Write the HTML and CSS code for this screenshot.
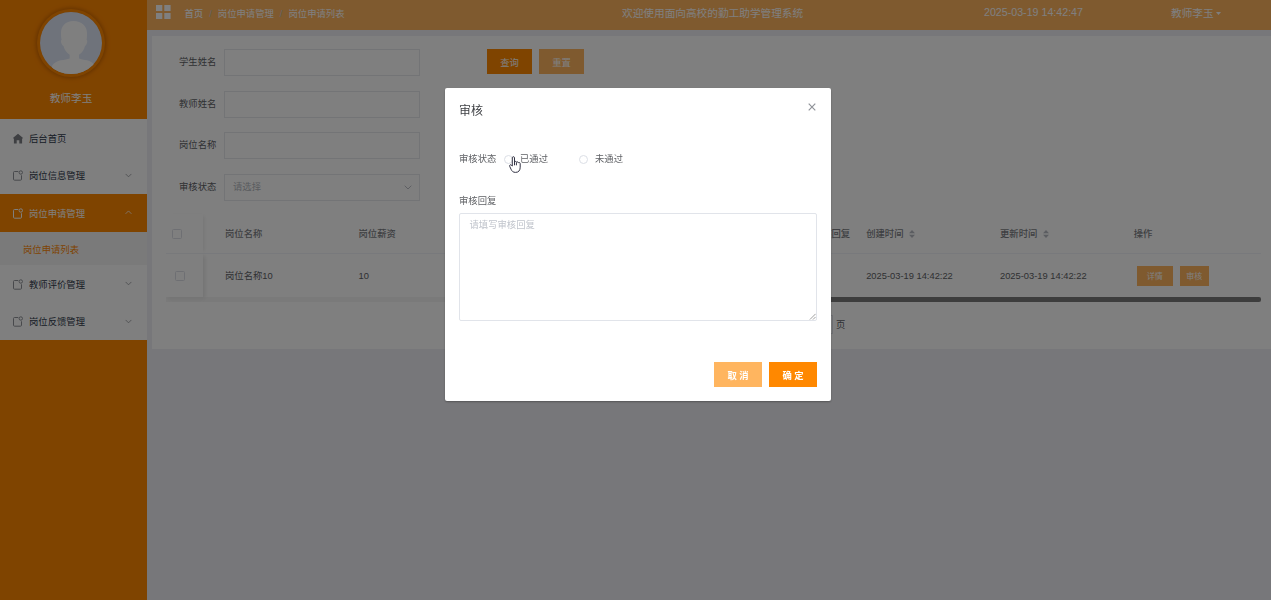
FILE: index.html
```html
<!DOCTYPE html>
<html lang="zh-CN">
<head>
<meta charset="utf-8">
<title>欢迎使用面向高校的勤工助学管理系统</title>
<link rel="stylesheet" href="styles.css">
</head>
<body>
<svg class="defs" width="0" height="0">
  <symbol id="doc" viewBox="0 0 10 11"><path d="M5.300 1.500H1.500q-1 0-1 1v6.700q0 1 1 1h6q1 0 1-1V5.300" fill="none" stroke="currentColor"/><circle cx="7.800" cy="2.500" r="1.700" fill="none" stroke="currentColor"/></symbol>
  <symbol id="down" viewBox="0 0 8 5"><path d="M.7.7 4 4 7.3.7" fill="none" stroke="currentColor" stroke-width=".9"/></symbol>
  <symbol id="up" viewBox="0 0 8 5"><path d="M.7 4 4 .7 7.3 4" fill="none" stroke="currentColor" stroke-width=".9"/></symbol>
  <symbol id="sort" viewBox="0 0 6 8"><path d="M0 3.3 3 0l3 3.3zM0 4.7h6L3 8z" fill="currentColor"/></symbol>
</svg>
<div class="app">
  <aside class="sidebar">
    <div class="profile">
      <svg class="avatar" viewBox="0 0 62 62"><path fill="#dfe7f7" d="M0 0h62v62H0z"/><path fill="#fff" d="M33.500 9c-8 0-12.500 5-12.500 12 0 3 .2 5 .6 7-1.500.5 0 5 1.900 6 1 4 3 6.500 6.200 8.800v3.600c-3.700 2-14 .4-17.700 7.600V62h43v-8c-3.500-7.200-12.500-5.600-16-7.600v-3.600c3.300-2.300 5-4.800 6-8.800 1.900-1 3-5.500 1.600-6 .3-2 .4-4 .4-7 0-7-5.500-12-13.500-12z"/></svg>
      <div class="name">教师李玉</div>
    </div>
    <nav class="menu">
      <div class="item"><svg class="ic" viewBox="0 0 10 10"><path fill="currentColor" d="M5 .2.2 4.200V5H.9v5h2.800V6.700h2.600V10h2.800V5h.7v-.8z"/></svg><span>后台首页</span></div>
      <div class="item"><svg class="ic"><use href="#doc"/></svg><span>岗位信息管理</span><svg class="arr"><use href="#down"/></svg></div>
      <div class="item active"><svg class="ic"><use href="#doc"/></svg><span>岗位申请管理</span><svg class="arr"><use href="#up"/></svg></div>
      <div class="sub">岗位申请列表</div>
      <div class="item"><svg class="ic"><use href="#doc"/></svg><span>教师评价管理</span><svg class="arr"><use href="#down"/></svg></div>
      <div class="item"><svg class="ic"><use href="#doc"/></svg><span>岗位反馈管理</span><svg class="arr"><use href="#down"/></svg></div>
    </nav>
  </aside>
  <div class="main">
    <header class="header">
      <svg class="grid-ic" viewBox="0 0 15 14"><path fill="#fff" d="M0 0h6.300v6H0zM8.300 0h6.300v6H8.300zM0 8h6.300v6H0zM8.300 8h6.300v6H8.300z"/></svg>
      <div class="crumbs"><b>首页</b><i>/</i><span>岗位申请管理</span><i>/</i><span>岗位申请列表</span></div>
      <div class="title">欢迎使用面向高校的勤工助学管理系统</div>
      <div class="clock">2025-03-19 14:42:47</div>
      <div class="user">教师李玉<svg viewBox="0 0 5 3"><path fill="currentColor" d="M0 0h5L2.500 3z"/></svg></div>
    </header>
    <section class="panel">
      <div class="search">
        <div class="fields">
          <label>学生姓名</label><div class="input"></div>
          <label>教师姓名</label><div class="input"></div>
          <label>岗位名称</label><div class="input"></div>
          <label>审核状态</label><div class="input select"><span>请选择</span><svg><use href="#down"/></svg></div>
        </div>
        <button class="btn">查询</button>
        <button class="btn light">重置</button>
      </div>
      <div class="table">
        <div class="row head">
          <div class="fix"><i class="check"></i></div>
          <div>岗位名称</div><div>岗位薪资</div><div>学生姓名</div><div>审核状态</div><div class="reply">审核回复</div>
          <div>创建时间<svg class="sort"><use href="#sort"/></svg></div><div>更新时间<svg class="sort"><use href="#sort"/></svg></div><div>操作</div>
        </div>
        <div class="row">
          <div class="fix last"><i class="check"></i></div>
          <div>岗位名称10</div><div>10</div><div></div><div></div><div></div>
          <div>2025-03-19 14:42:22</div><div>2025-03-19 14:42:22</div><div class="ops"><button class="mini wide">详情</button><button class="mini">审核</button></div>
        </div>
      </div>
      <div class="scroll"><div class="thumb"></div></div>
      <div class="pager"><div class="page-input">1</div><span>页</span></div>
    </section>
  </div>
</div>
<div class="mask">
  <div class="dialog">
    <div class="dlg-head"><span>审核</span><svg class="close" viewBox="0 0 8 8"><path d="m.7.7 6.600 6.600M7.300.7.7 7.300" stroke="currentColor" stroke-width="1.200"/></svg></div>
    <div class="status"><span class="lab">审核状态</span><span class="radio"><i></i>已通过</span><span class="radio"><i></i>未通过</span></div>
    <div class="lab reply-lab">审核回复</div>
    <div class="area">请填写审核回复<svg viewBox="0 0 8 8"><path d="M1 7.500 7.500 1M4.500 7.500l3-3" stroke="#777" stroke-width=".8"/></svg></div>
    <div class="dlg-foot"><button class="act light">取 消</button><button class="act">确 定</button></div>
    <svg class="cursor" viewBox="0 0 12 17"><path fill="#fff" stroke="#334" stroke-width="1" stroke-linejoin="round" d="M3.300 10V1.800c0-1.500 2.200-1.500 2.200 0V6c.4-1 1.900-.7 1.900.3.400-.8 1.900-.6 1.900.5.500-.7 1.900-.3 1.900.8v3.600c0 3-1.400 5.200-4.600 5.200-2.700 0-3.700-1.300-4.600-3.200L.7 10.300c-.5-1.300.8-2 1.500-1.200zM5.500 6v3.300M7.400 6.500v2.800"/></svg>
  </div>
</div>
</body>
</html>
```
FILE: styles.css
```css
* { box-sizing: border-box; }
body {
  margin: 0;
  font: 9.33px/14px "Liberation Sans", "Noto Sans CJK SC", sans-serif;
  color: #606266;
  overflow: hidden;
}
i { font-style: normal; }
button { font-family: inherit; border: 0; padding: 0; }
.defs { position: absolute; }
.app { display: flex; height: 600px; background: #efeff4; }

.sidebar { width: 147px; flex: none; background: #ff8800; }
.profile { height: 119px; padding-top: 12px; display: flex; flex-direction: column; align-items: center; padding-right: 5px; }
.avatar { width: 62px; height: 62px; border-radius: 50%; box-shadow: 0 0 0 3px #ff8800, 0 0 4px 4px #c86400; }
.name { margin-top: 16px; font-size: 10.67px; line-height: 16px; color: #fff; }
.menu { background: #fff; color: #303a4c; }
.item { height: 37.5px; display: flex; align-items: center; padding: 2px 15px 0 13px; gap: 6px; }
.item.active { background: #ff8800; color: #fff; }
.ic { width: 10px; height: 11px; margin-top: -1px; color: #909399; }
.item:first-child .ic { color: #7c7f85; }
.active .ic, .active .arr { color: #fff; }
.arr { width: 7px; height: 5px; margin: -2px 0 0 auto; color: #909399; }
.sub { height: 33.5px; line-height: 36px; padding-left: 23px; background: #f5f5f5; color: #ff8800; }

.main { flex: 1; min-width: 0; }
.header { height: 30px; background: #ffb55f; color: #fff; display: flex; padding-left: 9px; }
.grid-ic { width: 15px; height: 14px; margin-top: 5px; }
.crumbs { display: flex; width: 451px; padding: 7px 0 0 13.5px; }
.crumbs b { font-weight: 500; }
.crumbs i { width: 14.7px; text-align: center; color: #c0c4cc; }
.title { width: 362px; padding-top: 6px; font-size: 10.67px; line-height: 15px; }
.clock { width: 187px; padding-top: 5px; font-size: 10.67px; line-height: 15px; }
.user { padding-top: 6px; font-size: 10.67px; line-height: 15px; }
.user svg { width: 5px; height: 3px; margin: 0 0 2px 2px; }

.panel { margin: 6px 0 0 5px; height: 313px; background: #fff; padding: 13px 10px 0 14px; }
.search { display: flex; height: 165px; padding-left: 13px; align-items: flex-start; }
.fields { display: grid; grid-template-columns: 45px 196px; grid-auto-rows: 41.5px; margin-right: 67px; color: #606266; }
.fields label { line-height: 27px; }
.input { height: 27px; border: 1px solid #e6e8ed; }
.select { display: flex; align-items: center; padding: 0 7px 0 8px; color: #b4b8c0; }
.select svg { width: 8px; height: 5px; margin-left: auto; }
.btn { width: 45px; height: 25px; margin-right: 7px; background: #ff8800; color: #fff; font-size: 9.33px; }
.light { background: #ffb55f; }

.row { display: grid; grid-template-columns: 37px 155.5px 133.7px 133.7px 187px 53.3px 133.8px 133.7px 1fr; height: 43px; align-items: center; border-bottom: 1px solid #f1f3f8; }
.row + .row { border: 0; }
.head { color: #7c7f85; font-weight: 500; height: 40px; }
.row > :nth-child(2) { padding-left: 22px; }
.fix { align-self: stretch; display: flex; align-items: center; padding-left: 6px; box-shadow: 3px 0 4px -2px #eaeaea; }
.fix.last { padding-left: 9px; box-shadow: 2px 2px 4px #e6e6e6; clip-path: inset(0 -6px -6px 0); }
.check { width: 10px; height: 10px; border: 1px solid #dcdfe6; border-radius: 1.5px; }
.sort { width: 6px; height: 8px; margin: 0 0 -1px 6px; color: #b7bbc3; }
.ops { display: flex; gap: 7px; padding-left: 3px; }
.mini { width: 29px; height: 20px; background: #ffb55f; color: #fff; font-size: 8px; }
.wide { width: 36px; }
.scroll { height: 5px; background: #f5f5f5; }
.thumb { height: 5px; width: 810px; margin-left: auto; background: #7b7b7b; border-radius: 2px; }
.pager { display: flex; padding: 13px 0 0 635px; gap: 3px; line-height: 20px; }
.page-input { width: 32px; height: 19px; border: 1px solid #dcdfe6; text-align: center; line-height: 17px; }

.mask { position: fixed; inset: 0; background: rgba(0, 0, 0, .5); }
.dialog { position: absolute; left: 445px; top: 88px; width: 385.5px; height: 313px; padding: 14px 13.5px 13px 14px; background: #fff; border-radius: 2px; box-shadow: 0 1px 2px rgba(0,0,0,.3); color: #606266; }
.dlg-head { display: flex; justify-content: space-between; height: 50px; font-size: 12px; line-height: 18px; color: #404246; }
.close { width: 8px; height: 8px; margin-top: 1px; margin-right: 1px; color: #909399; }
.status { display: flex; height: 42px; line-height: 14px; }
.lab { color: #606266; }
.status .lab { width: 45px; }
.radio { display: flex; width: 75px; gap: 7px; }
.radio i { width: 9px; height: 9px; margin-top: 3px; border: 1px solid #dcdfe6; border-radius: 50%; }
.reply-lab { height: 19px; }
.area { position: relative; height: 108px; border: 1px solid #e1e4ea; border-radius: 2px; padding: 4px 9.5px; color: #c0c4cc; }
.area svg { position: absolute; right: 0; bottom: 0; width: 7px; height: 7px; }
.dlg-foot { display: flex; justify-content: flex-end; gap: 7px; margin-top: 41px; }
.act { width: 48px; height: 25px; background: #ff8800; color: #fff; font-size: 9.33px; font-weight: 700; }
.act.light { background: #ffb55f; }
.cursor { position: absolute; left: 64px; top: 68px; width: 12px; height: 17px; }
```
